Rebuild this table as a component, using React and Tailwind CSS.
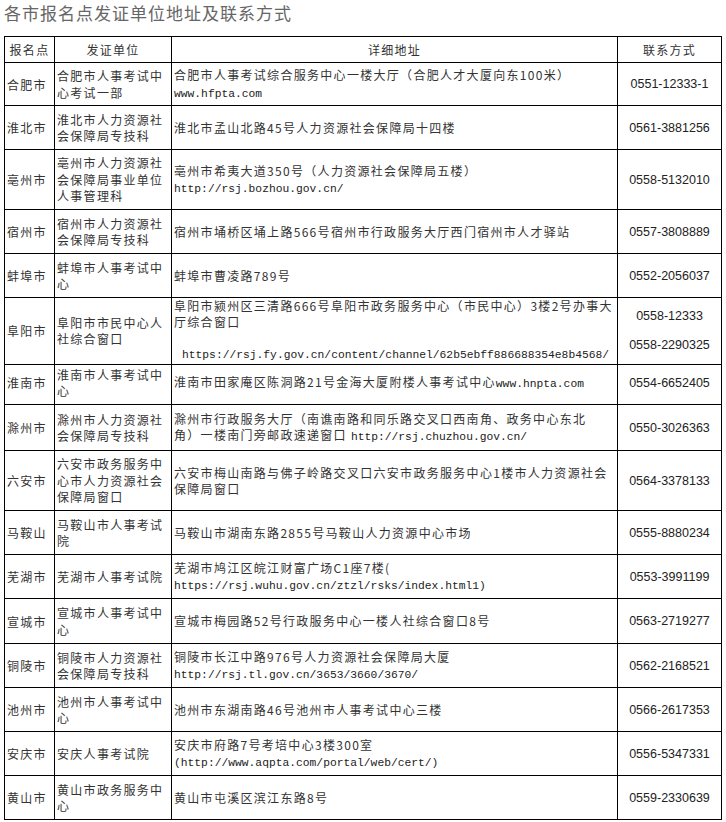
import React from "react";

const CJK = { fontFamily: '"Noto Sans CJK SC", "Noto Sans", sans-serif' };

const rows = [
  { h: "h-[43px]", city: "合肥市", org: ["合肥市人事考试中", "心考试一部"], addr: ["合肥市人事考试综合服务中心一楼大厅（合肥人才大厦向东100米）", "www.hfpta.com"], phone: ["0551-12333-1"] },
  { h: "h-[44px]", city: "淮北市", org: ["淮北市人力资源社", "会保障局专技科"], addr: ["淮北市孟山北路45号人力资源社会保障局十四楼"], phone: ["0561-3881256"] },
  { h: "h-[60px]", city: "亳州市", org: ["亳州市人力资源社", "会保障局事业单位", "人事管理科"], addr: ["亳州市希夷大道350号（人力资源社会保障局五楼）", "http://rsj.bozhou.gov.cn/"], phone: ["0558-5132010"] },
  { h: "h-[44px]", city: "宿州市", org: ["宿州市人力资源社", "会保障局专技科"], addr: ["宿州市埇桥区埇上路566号宿州市行政服务大厅西门宿州市人才驿站"], phone: ["0557-3808889"] },
  { h: "h-[44px]", city: "蚌埠市", org: ["蚌埠市人事考试中", "心"], addr: ["蚌埠市曹凌路789号"], phone: ["0552-2056037"] },
  { h: "h-[63px]", city: "阜阳市", org: ["阜阳市市民中心人", "社综合窗口"], addr: ["阜阳市颍州区三清路666号阜阳市政务服务中心（市民中心）3楼2号办事大", "厅综合窗口", "", "\u00a0\u00a0https://rsj.fy.gov.cn/content/channel/62b5ebff886688354e8b4568/"], phone: ["0558-12333", "0558-2290325"], tight: true },
  { h: "h-[44px]", city: "淮南市", org: ["淮南市人事考试中", "心"], addr: ["淮南市田家庵区陈洞路21号金海大厦附楼人事考试中心www.hnpta.com"], phone: ["0554-6652405"] },
  { h: "h-[46px]", city: "滁州市", org: ["滁州市人力资源社", "会保障局专技科"], addr: ["滁州市行政服务大厅（南谯南路和同乐路交叉口西南角、政务中心东北", "角）一楼南门旁邮政速递窗口 http://rsj.chuzhou.gov.cn/"], phone: ["0550-3026363"] },
  { h: "h-[60px]", city: "六安市", org: ["六安市政务服务中", "心市人力资源社会", "保障局窗口"], addr: ["六安市梅山南路与佛子岭路交叉口六安市政务服务中心1楼市人力资源社会", "保障局窗口"], phone: ["0564-3378133"] },
  { h: "h-[44px]", city: "马鞍山", org: ["马鞍山市人事考试", "院"], addr: ["马鞍山市湖南东路2855号马鞍山人力资源中心市场"], phone: ["0555-8880234"] },
  { h: "h-[44px]", city: "芜湖市", org: ["芜湖市人事考试院"], addr: ["芜湖市鸠江区皖江财富广场C1座7楼(", "https://rsj.wuhu.gov.cn/ztzl/rsks/index.html1)"], phone: ["0553-3991199"] },
  { h: "h-[45px]", city: "宣城市", org: ["宣城市人事考试中", "心"], addr: ["宣城市梅园路52号行政服务中心一楼人社综合窗口8号"], phone: ["0563-2719277"] },
  { h: "h-[44px]", city: "铜陵市", org: ["铜陵市人力资源社", "会保障局专技科"], addr: ["铜陵市长江中路976号人力资源社会保障局大厦", "http://rsj.tl.gov.cn/3653/3660/3670/"], phone: ["0562-2168521"] },
  { h: "h-[44px]", city: "池州市", org: ["池州市人事考试中", "心"], addr: ["池州市东湖南路46号池州市人事考试中心三楼"], phone: ["0566-2617353"] },
  { h: "h-[44px]", city: "安庆市", org: ["安庆人事考试院"], addr: ["安庆市府路7号考培中心3楼300室", "(http://www.aqpta.com/portal/web/cert/)"], phone: ["0556-5347331"] },
  { h: "h-[44px]", city: "黄山市", org: ["黄山市政务服务中", "心"], addr: ["黄山市屯溪区滨江东路8号"], phone: ["0559-2330639"] },
];

function Line({ text }) {
  if (text === "") return <div className="h-[16px]" />;
  const parts = text.split(/(\(?(?:https?:\/\/|www\.)[^\s（）]+)/);
  return (
    <div className="whitespace-nowrap">
      {parts.map((p, i) =>
        /^\(?(?:https?:\/\/|www\.)/.test(p) ? (
          <span key={i} className="text-[11.3px] tracking-normal text-[#222]" style={{ fontFamily: '"Liberation Mono", monospace' }}>
            {p}
          </span>
        ) : (
          <span key={i}>{p}</span>
        )
      )}
    </div>
  );
}

function Cell({ children, className = "" }) {
  return <div className={"flex border-r border-b border-black " + className}>{children}</div>;
}

export default function App() {
  return (
    <div className="w-[726px] bg-white text-[#333]" style={CJK}>
      <div className="h-[36px] pl-[4px] text-[17px] leading-[26px] tracking-[1px] text-[#666]">
        各市报名点发证单位地址及联系方式
      </div>
      <div className="ml-[4px] w-[718px] border-l border-t border-black text-[12px] tracking-[1.3px]">
        <div className="grid h-[26px] grid-cols-[50px_117px_446px_104px]">
          <Cell className="items-center justify-center">报名点</Cell>
          <Cell className="items-center justify-center">发证单位</Cell>
          <Cell className="items-center justify-center">详细地址</Cell>
          <Cell className="items-center justify-center">联系方式</Cell>
        </div>
        {rows.map((r) => (
          <div key={r.city} className={"grid grid-cols-[50px_117px_446px_104px] " + r.h}>
            <Cell className="items-center pl-[2px] pt-[1px] leading-[16px]">{r.city}</Cell>
            <Cell className={"flex-col justify-center pl-[2px] " + (r.tight ? "leading-[15.5px]" : "pt-[1px] leading-[16.5px]")}>
              {r.org.map((l, i) => (
                <Line key={i} text={l} />
              ))}
            </Cell>
            <Cell className={"flex-col justify-center pl-[2px] " + (r.tight ? "leading-[15.5px]" : "pt-[1px] leading-[16.5px]")}>
              {r.addr.map((l, i) => (
                <Line key={i} text={l} />
              ))}
            </Cell>
            <Cell
              className={"flex-col items-center justify-center text-[12.5px] leading-[16px] tracking-normal text-[#222] " + (r.phone.length > 1 ? "gap-[13px]" : "")}
            >
              {r.phone.map((p, i) => (
                <div key={i} style={{ fontFamily: '"Liberation Sans", Arial, sans-serif' }}>
                  {p}
                </div>
              ))}
            </Cell>
          </div>
        ))}
      </div>
    </div>
  );
}
